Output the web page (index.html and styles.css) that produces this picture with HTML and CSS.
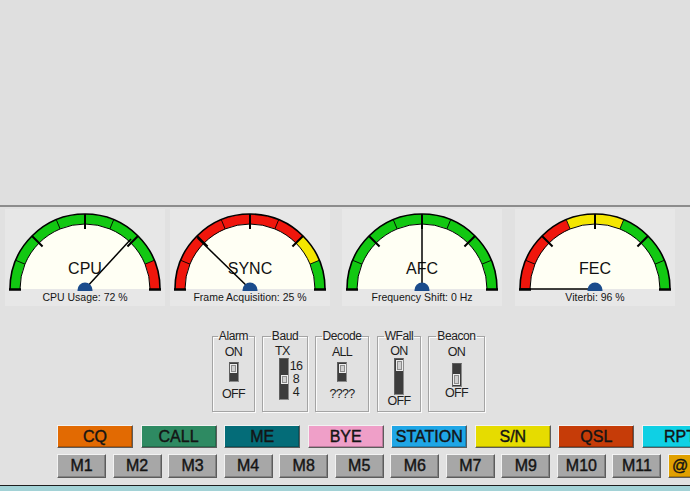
FILE: index.html
```html
<!DOCTYPE html>
<html>
<head>
<meta charset="utf-8">
<link rel="stylesheet" href="styles.css">
</head>
<body>
<div class="app">
  <div class="top"></div>

  <div class="gauges">
    <div class="gauge">
      <svg class="dial" width="160" height="80" viewBox="0 0 160 80">
        <path class="face" d="M15 78A65 65 0 0 1 145 78Z"/>
        <path class="band green" d="M10 78A70 70 0 0 1 144.67 51.21"/>
        <path class="band red" d="M144.67 51.21A70 70 0 0 1 150 78"/>
        <use href="#frame"/>
        <text class="dial-title" x="80" y="63">CPU</text>
        <path class="needle" d="M80 78L126 28"/>
        <circle class="pivot" cx="80" cy="79" r="7.5"/>
      </svg>
      <div class="caption">CPU Usage: 72 %</div>
    </div>
    <div class="gauge">
      <svg class="dial" width="160" height="80" viewBox="0 0 160 80">
        <path class="face" d="M15 78A65 65 0 0 1 145 78Z"/>
        <path class="band red" d="M10 78A70 70 0 0 1 129.5 28.5"/>
        <path class="band yellow" d="M129.5 28.5A70 70 0 0 1 144.67 51.21"/>
        <path class="band green" d="M144.67 51.21A70 70 0 0 1 150 78"/>
        <use href="#frame"/>
        <text class="dial-title" x="80" y="63">SYNC</text>
        <path class="needle" d="M80 78L27.5 27"/>
        <circle class="pivot" cx="80" cy="79" r="7.5"/>
      </svg>
      <div class="caption">Frame Acquisition: 25 %</div>
    </div>
    <div class="gauge">
      <svg class="dial" width="160" height="80" viewBox="0 0 160 80">
        <path class="face" d="M15 78A65 65 0 0 1 145 78Z"/>
        <path class="band green" d="M10 78A70 70 0 0 1 150 78"/>
        <use href="#frame"/>
        <text class="dial-title" x="80" y="63">AFC</text>
        <path class="needle" d="M80 78L80 3"/>
        <circle class="pivot" cx="80" cy="79" r="7.5"/>
      </svg>
      <div class="caption">Frequency Shift: 0 Hz</div>
    </div>
    <div class="gauge">
      <svg class="dial" width="160" height="80" viewBox="0 0 160 80">
        <path class="face" d="M15 78A65 65 0 0 1 145 78Z"/>
        <path class="band red" d="M10 78A70 70 0 0 1 53.21 13.33"/>
        <path class="band yellow" d="M53.21 13.33A70 70 0 0 1 106.79 13.33"/>
        <path class="band green" d="M106.79 13.33A70 70 0 0 1 150 78"/>
        <use href="#frame"/>
        <text class="dial-title" x="80" y="63">FEC</text>
        <path class="needle" d="M80 78L5 78"/>
        <circle class="pivot" cx="80" cy="79" r="7.5"/>
      </svg>
      <div class="caption">Viterbi: 96 %</div>
    </div>
  </div>

  <div class="switches">
    <fieldset class="grp grp-alarm">
      <legend>Alarm</legend>
      <div class="sw sw-std">
        <div class="lbl">ON</div>
        <div class="slot slot-std top-pos"><div class="thumb"></div></div>
        <div class="lbl lbl-std-off">OFF</div>
      </div>
    </fieldset>
    <fieldset class="grp grp-baud">
      <legend>Baud</legend>
      <div class="sw-baud">
        <div class="lbl tx">TX</div>
        <div class="baud-row">
          <div class="slot slot-baud mid-pos"><div class="thumb"></div></div>
          <div class="baud-vals">
            <div class="lbl">16</div>
            <div class="lbl">8</div>
            <div class="lbl">4</div>
          </div>
        </div>
      </div>
    </fieldset>
    <fieldset class="grp grp-decode">
      <legend>Decode</legend>
      <div class="sw sw-std">
        <div class="lbl">ALL</div>
        <div class="slot slot-std top-pos"><div class="thumb"></div></div>
        <div class="lbl lbl-std-off">????</div>
      </div>
    </fieldset>
    <fieldset class="grp grp-wfall">
      <legend>WFall</legend>
      <div class="sw sw-wfall">
        <div class="lbl">ON</div>
        <div class="slot slot-wfall top-pos"><div class="thumb thumb-tall"></div></div>
        <div class="lbl">OFF</div>
      </div>
    </fieldset>
    <fieldset class="grp grp-beacon">
      <legend>Beacon</legend>
      <div class="sw sw-std">
        <div class="lbl">ON</div>
        <div class="slot slot-beacon bottom-pos"><div class="thumb thumb-tall"></div></div>
        <div class="lbl">OFF</div>
      </div>
    </fieldset>
  </div>

  <div class="buttons">
    <div class="row row-macro">
      <div class="btn mac c-cq">CQ</div>
      <div class="btn mac c-call">CALL</div>
      <div class="btn mac c-me">ME</div>
      <div class="btn mac c-bye">BYE</div>
      <div class="btn mac c-station">STATION</div>
      <div class="btn mac c-sn">S/N</div>
      <div class="btn mac c-qsl">QSL</div>
      <div class="btn mac c-rpt">RPT</div>
    </div>
    <div class="row row-mem">
      <div class="btn mem">M1</div>
      <div class="btn mem">M2</div>
      <div class="btn mem">M3</div>
      <div class="btn mem">M4</div>
      <div class="btn mem">M8</div>
      <div class="btn mem">M5</div>
      <div class="btn mem">M6</div>
      <div class="btn mem">M7</div>
      <div class="btn mem">M9</div>
      <div class="btn mem">M10</div>
      <div class="btn mem">M11</div>
      <div class="btn mem c-at">@</div>
    </div>
  </div>

  <div class="status"></div>
</div>

<svg class="defs" width="0" height="0" aria-hidden="true">
  <defs>
    <g id="frame">
      <path class="ln-outer" d="M5 78A75 75 0 0 1 155 78"/>
      <path class="ln-inner" d="M15 78A65 65 0 0 1 145 78"/>
      <path class="ln-sep" d="M19.95 53.13L10.71 49.3M55.13 17.95L51.3 8.71M104.87 17.95L108.7 8.71M140.05 53.13L149.29 49.3"/>
      <path class="ln-tick" d="M26.97 24.97L37.57 35.57M80 3L80 18M133.03 24.97L122.43 35.57"/>
      <path class="ln-foot" d="M4 78.5H16M144 78.5H156"/>
    </g>
  </defs>
</svg>
</body>
</html>
```
FILE: styles.css
```css
html, body {
  margin: 0;
  padding: 0;
}

body {
  width: 690px;
  height: 491px;
  overflow: hidden;
  background: #e1e1e1;
  font-family: "Liberation Sans", Arial, sans-serif;
  color: #1c1c1c;
}

.app {
  display: flex;
  flex-direction: column;
  height: 491px;
}

.top {
  flex: none;
  height: 205px;
  background: #dfdfdf;
  border-bottom: 2px solid #8c8c8c;
}

/* ---------- gauges ---------- */
.gauges {
  flex: none;
  display: grid;
  grid-template-columns: 165px 172px 173px 160px;
  padding: 2px 0 0 5px;
}

.gauge {
  width: 160px;
  background: #e7e7e7;
  padding: 2px 0;
}

.dial {
  display: block;
}

.face {
  fill: #fffff4;
}

.band {
  fill: none;
  stroke-width: 10;
}

.band.green { stroke: #12c812; }
.band.red { stroke: #f0160c; }
.band.yellow { stroke: #f4e600; }

.ln-outer {
  fill: none;
  stroke: #000;
  stroke-width: 1.6;
}

.ln-inner {
  fill: none;
  stroke: #000;
  stroke-width: 1;
}

.ln-sep {
  stroke: #000;
  stroke-width: 0.9;
}

.ln-tick {
  stroke: #000;
  stroke-width: 2;
}

.ln-foot {
  stroke: #000;
  stroke-width: 2.5;
}

.dial-title {
  font-family: "Liberation Sans", Arial, sans-serif;
  font-size: 16px;
  fill: #111;
  text-anchor: middle;
}

.needle {
  stroke: #000;
  stroke-width: 1.5;
  fill: none;
}

.pivot {
  fill: #1b4c8c;
}

.caption {
  height: 13px;
  font-size: 10.5px;
  line-height: 13px;
  text-align: center;
  white-space: nowrap;
  color: #151515;
}

/* ---------- switches ---------- */
.switches {
  flex: none;
  display: flex;
  gap: 7px;
  padding-left: 212px;
  margin-top: 24px;
}

.grp {
  margin: 0;
  padding: 0;
  min-width: 0;
  height: 82px;
  box-sizing: border-box;
  border: 1px solid #a4a4a4;
  box-shadow: 1px 1px 0 #fbfbfb, inset 1px 1px 0 #fbfbfb;
}

.grp legend {
  margin: 0 auto;
  padding: 0 1px;
  font-size: 12px;
  line-height: 13px;
  letter-spacing: -0.4px;
  color: #222;
}

.grp-alarm { width: 43px; }
.grp-baud { width: 46px; }
.grp-decode { width: 54px; }
.grp-wfall { width: 44px; margin-left: 1px; }
.grp-beacon { width: 57px; }

.lbl {
  font-size: 12.5px;
  line-height: 13px;
  letter-spacing: -0.7px;
  color: #1e1e1e;
  white-space: nowrap;
}

.sw {
  display: flex;
  flex-direction: column;
  align-items: center;
}

.sw-std { padding-top: 3px; }
.sw-wfall { padding-top: 2px; }

.slot {
  box-sizing: border-box;
  width: 10px;
  background: #3c3c3c;
  border: 1px solid #5e5e5e;
  border-right-color: #8a8a8a;
  border-bottom-color: #8a8a8a;
  display: flex;
  flex-direction: column;
  align-items: center;
  padding: 1px 0;
}

.top-pos { justify-content: flex-start; }
.mid-pos { justify-content: center; }
.bottom-pos { justify-content: flex-end; }

.thumb {
  box-sizing: border-box;
  width: 7px;
  height: 9px;
  background: #cfcfcf;
  border: 1px solid #ececec;
  box-shadow: inset 0 0 0 1px #8c8c8c;
}

.thumb-tall { height: 11px; }

.slot-std { margin-top: 3px; height: 20px; }
.lbl-std-off { margin-top: 6px; }
.slot-wfall { height: 37px; }
.slot-beacon { margin-top: 4px; height: 24px; }

.sw-baud {
  padding: 2px 0 0 12px;
}

.baud-row {
  display: flex;
  margin-left: 4px;
}

.slot-baud { height: 42px; }

.baud-vals {
  width: 14px;
  padding-top: 2px;
  text-align: center;
}

/* ---------- buttons ---------- */
.buttons {
  flex: none;
  display: flex;
  flex-direction: column;
  gap: 6px;
  margin-top: 13px;
  padding-left: 57px;
}

.row {
  display: flex;
  flex-wrap: nowrap;
}

.row-macro { gap: 7.57px; }
.row-mem { gap: 6.55px; }

.btn {
  flex: none;
  box-sizing: border-box;
  display: flex;
  align-items: center;
  justify-content: center;
  font-size: 16px;
  color: #141414;
  -webkit-text-stroke: 0.4px #141414;
  border: 1px solid;
  border-color: #f2f2f2 #5c5c5c #5c5c5c #f2f2f2;
  box-shadow: inset -1px -1px 0 rgba(0, 0, 0, 0.22);
  white-space: nowrap;
}

.mac {
  width: 76px;
  height: 23px;
}

.mem {
  width: 49px;
  height: 24px;
  background: #a7a7a7;
}

.c-cq { background: #e26a02; }
.c-call { background: #2e8a62; }
.c-me { background: #046c78; }
.c-bye { background: #ef9fc8; }
.c-station { background: #1fa6e6; }
.c-sn { background: #e6dc00; }
.c-qsl { background: #c63c08; }
.c-rpt { background: #0fd0e4; }
.c-at {
  background: #e0a000;
  justify-content: flex-start;
  padding-left: 3px;
}

.status {
  flex: none;
  margin-top: auto;
  height: 5px;
  border-top: 1px solid #1e1e1e;
  background: #a2d2d6;
}

.defs {
  display: block;
  width: 0;
  height: 0;
  overflow: hidden;
}
```
